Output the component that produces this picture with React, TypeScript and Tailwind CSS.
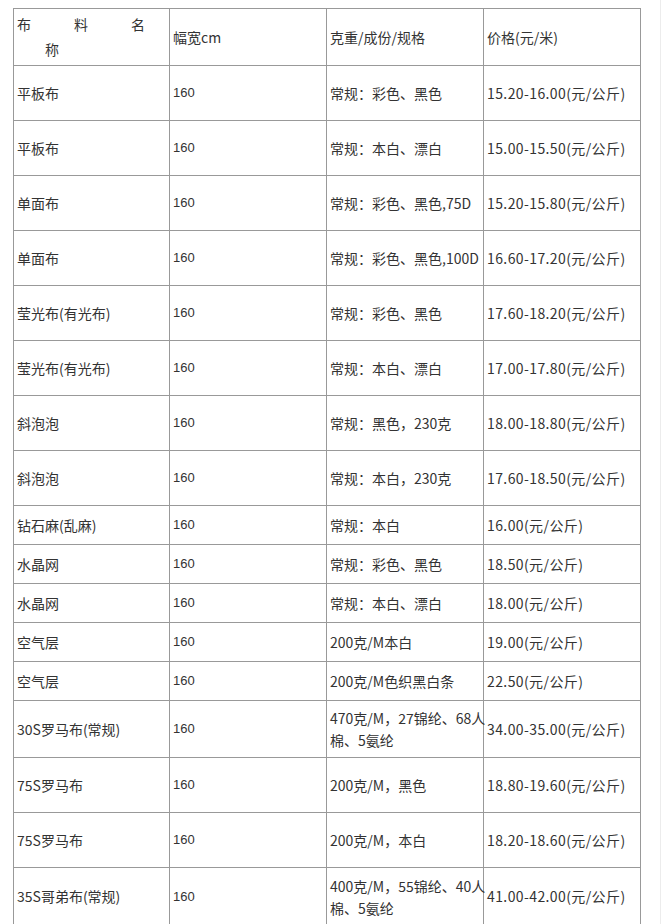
const rows: { name: string; width: string; spec: string[]; price: string; h: string }[] = [
  { name: "平板布", width: "160", spec: ["常规：彩色、黑色"], price: "15.20-16.00(元/公斤)", h: "h-[55px]" },
  { name: "平板布", width: "160", spec: ["常规：本白、漂白"], price: "15.00-15.50(元/公斤)", h: "h-[55px]" },
  { name: "单面布", width: "160", spec: ["常规：彩色、黑色,75D"], price: "15.20-15.80(元/公斤)", h: "h-[55px]" },
  { name: "单面布", width: "160", spec: ["常规：彩色、黑色,100D"], price: "16.60-17.20(元/公斤)", h: "h-[55px]" },
  { name: "莹光布(有光布)", width: "160", spec: ["常规：彩色、黑色"], price: "17.60-18.20(元/公斤)", h: "h-[55px]" },
  { name: "莹光布(有光布)", width: "160", spec: ["常规：本白、漂白"], price: "17.00-17.80(元/公斤)", h: "h-[55px]" },
  { name: "斜泡泡", width: "160", spec: ["常规：黑色，230克"], price: "18.00-18.80(元/公斤)", h: "h-[55px]" },
  { name: "斜泡泡", width: "160", spec: ["常规：本白，230克"], price: "17.60-18.50(元/公斤)", h: "h-[55px]" },
  { name: "钻石麻(乱麻)", width: "160", spec: ["常规：本白"], price: "16.00(元/公斤)", h: "h-[39px]" },
  { name: "水晶网", width: "160", spec: ["常规：彩色、黑色"], price: "18.50(元/公斤)", h: "h-[39px]" },
  { name: "水晶网", width: "160", spec: ["常规：本白、漂白"], price: "18.00(元/公斤)", h: "h-[39px]" },
  { name: "空气层", width: "160", spec: ["200克/M本白"], price: "19.00(元/公斤)", h: "h-[39px]" },
  { name: "空气层", width: "160", spec: ["200克/M色织黑白条"], price: "22.50(元/公斤)", h: "h-[39px]" },
  { name: "30S罗马布(常规)", width: "160", spec: ["470克/M，27锦纶、68人", "棉、5氨纶"], price: "34.00-35.00(元/公斤)", h: "h-[57px]" },
  { name: "75S罗马布", width: "160", spec: ["200克/M，黑色"], price: "18.80-19.60(元/公斤)", h: "h-[55px]" },
  { name: "75S罗马布", width: "160", spec: ["200克/M，本白"], price: "18.20-18.60(元/公斤)", h: "h-[55px]" },
  { name: "35S哥弟布(常规)", width: "160", spec: ["400克/M，55锦纶、40人", "棉、5氨纶"], price: "41.00-42.00(元/公斤)", h: "h-[58px]" },
];

const cell = "flex flex-col justify-center border-r border-b border-[#999] pl-[3px] whitespace-nowrap";

export default function App() {
  return (
    <div className="flex h-[924px] w-[667px] overflow-hidden bg-white font-['Noto_Sans_CJK_SC',sans-serif] text-[14px] text-[#333]">
      <div className="w-[661px] shrink-0 border-r border-[#ececec] pl-[13px] pt-[8px]">
        <div className="grid w-[628px] grid-cols-[156px_157px_157px_157px] border-l border-t border-[#999]">
          <div className={`${cell} h-[57px] leading-[25px]`}>
            <div className="flex w-[128px] justify-between">
              <span>布</span>
              <span>料</span>
              <span>名</span>
            </div>
            <div className="pl-[28px]">称</div>
          </div>
          <div className={`${cell} h-[57px]`}>幅宽cm</div>
          <div className={`${cell} h-[57px]`}>克重/成份/规格</div>
          <div className={`${cell} h-[57px]`}>价格(元/米)</div>

          {rows.map((r, i) => (
            <div key={i} className="contents">
              <div className={`${cell} ${r.h}`}>{r.name}</div>
              <div className={`${cell} ${r.h} font-['Liberation_Sans',sans-serif] text-[13px]`}>{r.width}</div>
              <div className={`${cell} ${r.h} leading-[22px]`}>
                {r.spec.map((s) => (
                  <div key={s}>{s}</div>
                ))}
              </div>
              <div className={`${cell} ${r.h} tracking-[0.4px]`}>{r.price}</div>
            </div>
          ))}
        </div>
      </div>
    </div>
  );
}
